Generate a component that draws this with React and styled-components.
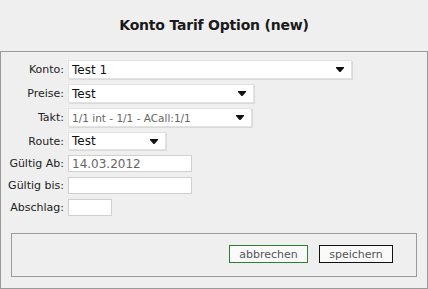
import styled, { createGlobalStyle } from 'styled-components'

const GlobalStyle = createGlobalStyle`
  html, body {
    margin: 0;
    padding: 0;
    background: #efefef;
  }
  body {
    font-family: "DejaVu Sans", Tahoma, sans-serif;
    color: #222;
  }
`

const Page = styled.div`
  width: 428px;
  height: 289px;
  background: #efefef;
  display: flex;
  flex-direction: column;
`

const Title = styled.h1`
  margin: 0;
  height: 51px;
  display: flex;
  align-items: center;
  justify-content: center;
  font-size: 14px;
  font-weight: bold;
  color: #1a1a1a;
  letter-spacing: -0.2px;
  padding-bottom: 2px;
  box-sizing: border-box;
`

const Panel = styled.div`
  border: 1px solid #9a9a9a;
  width: 428px;
  height: 238px;
  box-sizing: border-box;
  padding: 8px 10px 10px 0;
  display: flex;
  flex-direction: column;
`

const Form = styled.div`
  display: grid;
  grid-template-columns: 63px auto;
  column-gap: 4px;
  row-gap: 5px;
  align-items: center;
  justify-items: start;
`

const Label = styled.label`
  justify-self: end;
  font-size: 11px;
  color: #222;
`

const Select = styled.div`
  width: ${(p) => p.$w}px;
  height: ${(p) => p.$h || 19}px;
  box-sizing: border-box;
  background: #fff;
  border: 1px solid #e2e2e2;
  box-shadow: 1px 1px 0 #dadada;
  display: flex;
  align-items: center;
  justify-content: space-between;
  padding: 0 7px 0 3px;
  font-size: ${(p) => (p.$small ? 10.5 : 12)}px;
  color: ${(p) => (p.$small ? '#666' : '#111')};
`

const Caret = () => (
  <svg width="8" height="5" viewBox="0 0 8 5">
    <path d="M0 0h8v1L4.5 5h-1L0 1z" fill="#111" />
  </svg>
)

const Input = styled.div`
  width: ${(p) => p.$w}px;
  height: 17px;
  box-sizing: border-box;
  background: #fff;
  border: 1px solid #d0d0d0;
  display: flex;
  align-items: center;
  padding: 0 3px;
  font-size: 12px;
  color: #666;
`

const ButtonBar = styled.div`
  margin: 17px 0 0 10px;
  height: 44px;
  box-sizing: border-box;
  border: 1px solid #9a9a9a;
  display: flex;
  justify-content: flex-end;
  align-items: flex-start;
  gap: 11px;
  padding: 11px 23px 0 0;
`

const Button = styled.button`
  height: 18px;
  width: ${(p) => p.$w}px;
  box-sizing: border-box;
  padding: 0;
  background: #fafafa;
  border: 1px solid ${(p) => (p.$green ? '#2f7d32' : '#111')};
  font-family: "DejaVu Sans", Tahoma, sans-serif;
  font-size: 11px;
  color: #555;
  line-height: 15px;
`

export default function App() {
  return (
    <Page>
      <GlobalStyle />
      <Title>Konto Tarif Option (new)</Title>
      <Panel>
        <Form>
          <Label>Konto:</Label>
          <Select $w={284}>
            <span>Test 1</span>
            <Caret />
          </Select>
          <Label>Preise:</Label>
          <Select $w={186}>
            <span>Test</span>
            <Caret />
          </Select>
          <Label>Takt:</Label>
          <Select $w={184} $small>
            <span>1/1 int - 1/1 - ACall:1/1</span>
            <Caret />
          </Select>
          <Label>Route:</Label>
          <Select $w={98} $h={18}>
            <span>Test</span>
            <Caret />
          </Select>
          <Label>Gültig Ab:</Label>
          <Input $w={124}>14.03.2012</Input>
          <Label>Gültig bis:</Label>
          <Input $w={124} />
          <Label>Abschlag:</Label>
          <Input $w={44} />
        </Form>
        <ButtonBar>
          <Button $green $w={79}>abbrechen</Button>
          <Button $w={74}>speichern</Button>
        </ButtonBar>
      </Panel>
    </Page>
  )
}
